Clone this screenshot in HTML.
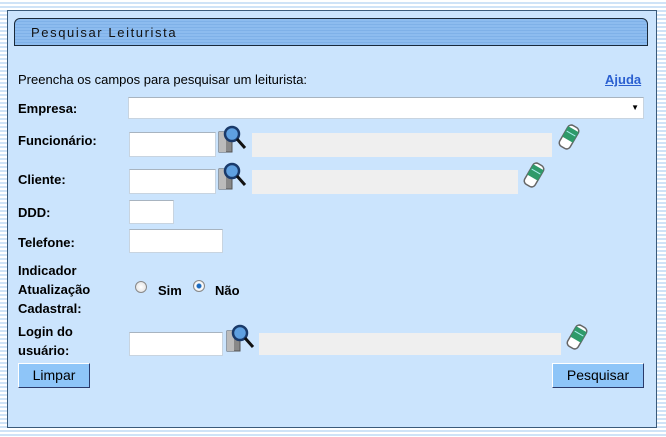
<!DOCTYPE html>
<html><head><meta charset="utf-8"><style>
*{margin:0;padding:0;box-sizing:border-box}
body{width:666px;height:437px;overflow:hidden;position:relative;font-family:"Liberation Sans",Arial,sans-serif;
background:repeating-linear-gradient(to bottom,#fff 0,#fff 2px,#cfe3f7 2px,#cfe3f7 4px)}
.panel{position:absolute;left:7px;top:10px;width:650px;height:418px;background:#cbe4fd;border:1px solid #3a5a7a}
.hdr{position:absolute;left:14px;top:18px;width:634px;height:28px;border:1px solid #1a2a3a;border-radius:6px 6px 0 0;
background:repeating-linear-gradient(to bottom,#8dbcef 0,#8dbcef 2px,#7fb1e8 2px,#7fb1e8 3px);
font-size:13px;letter-spacing:1.6px;color:#111;padding:6px 0 0 16px}
.a{position:absolute}
.l{position:absolute;left:18px;font-size:13px;font-weight:bold;color:#000}
.in{position:absolute;background:#fff;border:1px solid #c8d4e0;border-top-color:#a8b4c0}
.g{position:absolute;background:#efefef}
.btn{position:absolute;background:#8ec5f8;border:1px solid #2a3a6a;border-top-color:#fff;border-left-color:#fff;font-size:14px;text-align:center;line-height:22px;color:#000}
.rad{position:absolute;width:12px;height:12px;border-radius:50%;border:1px solid #888;background:radial-gradient(#fff,#ddd)}
</style></head><body>
<div class="panel"></div>
<div class="hdr">Pesquisar Leiturista</div>
<div class="a" style="left:18px;top:72px;font-size:13px">Preencha os campos para pesquisar um leiturista:</div>
<div class="a" style="left:605px;top:72px;font-size:13px;font-weight:bold;color:#2a5fd0;text-decoration:underline">Ajuda</div>

<div class="l" style="top:101px">Empresa:</div>
<div class="in" style="left:128px;top:97px;width:516px;height:22px"><span style="position:absolute;right:4px;top:5px;font-size:8px">▼</span></div>

<div class="l" style="top:133px">Funcionário:</div>
<div class="in" style="left:129px;top:132px;width:87px;height:25px"></div>
<svg class="a" style="left:218px;top:124px" width="30" height="32" viewBox="0 0 30 32"><rect x="1" y="8" width="13" height="20" fill="#888" stroke="#555"/><rect x="1" y="8" width="7" height="20" fill="#bbb"/><circle cx="14" cy="10" r="7" fill="#5fa0e0" stroke="#1a3a6a" stroke-width="2.5"/><line x1="19" y1="15" x2="27" y2="24" stroke="#111" stroke-width="3"/></svg>
<div class="g" style="left:252px;top:133px;width:300px;height:24px"></div>
<svg class="a" style="left:556px;top:124px" width="26" height="27" viewBox="0 0 26 27"><g transform="rotate(30 13 13)"><rect x="7" y="1" width="12" height="24" rx="4" fill="#fff" stroke="#666" stroke-width="1.5"/><rect x="7" y="4" width="12" height="12" fill="#2e9a6a"/><line x1="8" y1="9" x2="18" y2="9" stroke="#aee"/></g></svg>

<div class="l" style="top:172px">Cliente:</div>
<div class="in" style="left:129px;top:169px;width:87px;height:25px"></div>
<svg class="a" style="left:218px;top:161px" width="30" height="32" viewBox="0 0 30 32"><rect x="1" y="8" width="13" height="20" fill="#888" stroke="#555"/><rect x="1" y="8" width="7" height="20" fill="#bbb"/><circle cx="14" cy="10" r="7" fill="#5fa0e0" stroke="#1a3a6a" stroke-width="2.5"/><line x1="19" y1="15" x2="27" y2="24" stroke="#111" stroke-width="3"/></svg>
<div class="g" style="left:252px;top:170px;width:266px;height:24px"></div>
<svg class="a" style="left:521px;top:162px" width="26" height="27" viewBox="0 0 26 27"><g transform="rotate(30 13 13)"><rect x="7" y="1" width="12" height="24" rx="4" fill="#fff" stroke="#666" stroke-width="1.5"/><rect x="7" y="4" width="12" height="12" fill="#2e9a6a"/><line x1="8" y1="9" x2="18" y2="9" stroke="#aee"/></g></svg>

<div class="l" style="top:205px">DDD:</div>
<div class="in" style="left:129px;top:200px;width:45px;height:24px"></div>
<div class="l" style="top:235px">Telefone:</div>
<div class="in" style="left:129px;top:229px;width:94px;height:24px"></div>

<div class="l" style="top:261px;line-height:19px">Indicador<br>Atualização<br>Cadastral:</div>
<div class="rad" style="left:135px;top:281px"></div>
<div class="a" style="left:158px;top:283px;font-size:13px;font-weight:bold">Sim</div>
<div class="rad" style="left:193px;top:280px;background:radial-gradient(#1a6ac0 0,#1a6ac0 2px,#fff 3px,#ddd)"></div>
<div class="a" style="left:215px;top:283px;font-size:13px;font-weight:bold">Não</div>

<div class="l" style="top:322px;line-height:19px">Login do<br>usuário:</div>
<div class="in" style="left:129px;top:332px;width:94px;height:24px"></div>
<svg class="a" style="left:226px;top:323px" width="30" height="32" viewBox="0 0 30 32"><rect x="1" y="8" width="13" height="20" fill="#888" stroke="#555"/><rect x="1" y="8" width="7" height="20" fill="#bbb"/><circle cx="14" cy="10" r="7" fill="#5fa0e0" stroke="#1a3a6a" stroke-width="2.5"/><line x1="19" y1="15" x2="27" y2="24" stroke="#111" stroke-width="3"/></svg>
<div class="g" style="left:259px;top:333px;width:302px;height:22px"></div>
<svg class="a" style="left:564px;top:324px" width="26" height="27" viewBox="0 0 26 27"><g transform="rotate(30 13 13)"><rect x="7" y="1" width="12" height="24" rx="4" fill="#fff" stroke="#666" stroke-width="1.5"/><rect x="7" y="4" width="12" height="12" fill="#2e9a6a"/><line x1="8" y1="9" x2="18" y2="9" stroke="#aee"/></g></svg>

<div class="btn" style="left:18px;top:363px;width:72px;height:25px">Limpar</div>
<div class="btn" style="left:552px;top:363px;width:92px;height:25px">Pesquisar</div>
</body></html>
